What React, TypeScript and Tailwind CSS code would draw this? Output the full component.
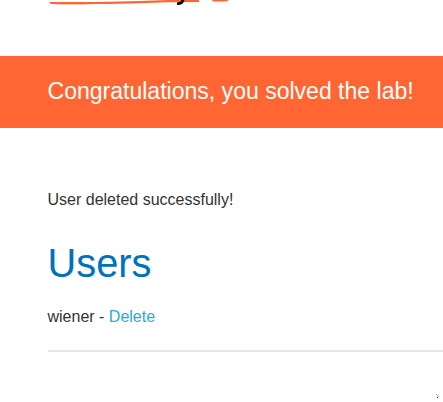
export default function App() {
  return (
    <div className="relative h-[402px] w-[443px] overflow-hidden bg-white font-['Liberation_Sans',Arial,sans-serif] text-[#333332]">
      <header className="h-14 pl-12">
        <svg width="200" height="8" viewBox="0 0 200 8">
          <path d="M1 2L48 2L92 1L120 0H151V2L120 2.2L92 3.3L60 4L3 4Z" fill="#ff6633" />
          <path d="M7 4H46L35 5H10Z" fill="#ffc9b8" />
          <path d="M164 0H181L178 1.6H165Z" fill="#ff6633" />
          <path d="M129 2.5L132.5 1.8L133.5 0H136.5Q135 4.8 131 5L129 4.8Z" fill="#000" />
        </svg>
      </header>
      <section className="flex h-[72px] items-center bg-[#ff6633] pb-0.5 pl-[47.5px]">
        <h4 className="whitespace-nowrap text-[23.04px] leading-7 text-white">Congratulations, you solved the lab!</h4>
      </section>
      <main className="pl-[47.5px] pt-[60px]">
        <p className="text-base leading-6">User deleted successfully!</p>
        <h1 className="mt-[23px] text-[39.81px] leading-[56px] text-[#0071bd]">Users</h1>
        <p className="mt-3.5 text-base leading-6">
          wiener - <a className="text-[#29aae1]">Delete</a>
        </p>
        <hr className="mt-[21px] border-t-2 border-[#e6e6e6]" />
      </main>
      <svg className="absolute left-[435px] top-[394px]" width="4" height="4" viewBox="0 0 4 4" shapeRendering="crispEdges">
        <path d="M1 0h1v1H1zM2 1h1v1H2z" fill="#aaa" />
        <path d="M3 2h1v1H3z" fill="#888" />
        <path d="M2 3h1v1H2z" fill="#111" />
      </svg>
    </div>
  );
}
